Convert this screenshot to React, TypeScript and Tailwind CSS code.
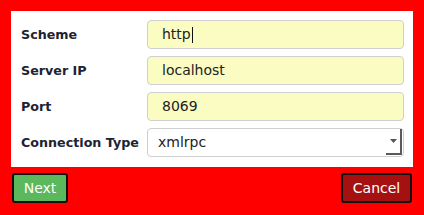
import React from 'react'

const fields = [
  { label: 'Scheme', value: 'http', caret: true },
  { label: 'Server IP', value: 'localhost' },
  { label: 'Port', value: '8069' },
]

function TextField({ value, caret }: { value: string; caret?: boolean }) {
  return (
    <div className="h-[29px] flex items-center rounded-[4px] border border-[#cfcfcf] bg-[#fafcc2] pl-[14px] text-[14px] text-[#222]">
      <span>{value}</span>
      {caret && <span className="ml-[1px] inline-block w-[1px] h-[16px] bg-[#111]" />}
    </div>
  )
}

function SelectField({ value }: { value: string }) {
  return (
    <div className="relative h-[29px] flex items-center rounded-[4px] border border-[#cfcfcf] bg-white pl-[10px] text-[14px] text-[#222]">
      <span>{value}</span>
      <div className="absolute right-[1px] top-[0px] bottom-[1px] w-[16px] flex items-center justify-center border-r-2 border-b-2 border-[#5a5a5a]">
        <svg width="7" height="4" viewBox="0 0 7 4">
          <path d="M0 0 L7 0 L3.5 4 Z" fill="#555" />
        </svg>
      </div>
    </div>
  )
}

export default function App() {
  return (
    <div
      className="w-[424px] h-[215px] bg-[#ff0000] pt-[11px]"
      style={{ fontFamily: '"DejaVu Sans", sans-serif' }}
    >
      <div className="mx-[11px] bg-white pt-[9px] pb-[10px] pl-[10px] pr-[9px]">
        <div className="grid grid-cols-[126px_1fr] gap-y-[7px] items-center">
          {fields.map((f) => (
            <React.Fragment key={f.label}>
              <span className="text-[12.7px] font-bold text-[#1d2333]">{f.label}</span>
              <TextField value={f.value} caret={f.caret} />
            </React.Fragment>
          ))}
          <span className="text-[12.7px] font-bold text-[#1d2333]">Connection Type</span>
          <SelectField value="xmlrpc" />
        </div>
      </div>
      <div className="mt-[6px] px-[12px] flex justify-between">
        <button className="h-[30px] w-[56px] rounded-[3px] border-2 border-[#111] bg-[#5cb85c] text-[14px] text-white">
          Next
        </button>
        <button className="h-[30px] w-[71px] rounded-[3px] border-2 border-[#111] bg-[#a51111] text-[14px] text-white">
          Cancel
        </button>
      </div>
    </div>
  )
}
